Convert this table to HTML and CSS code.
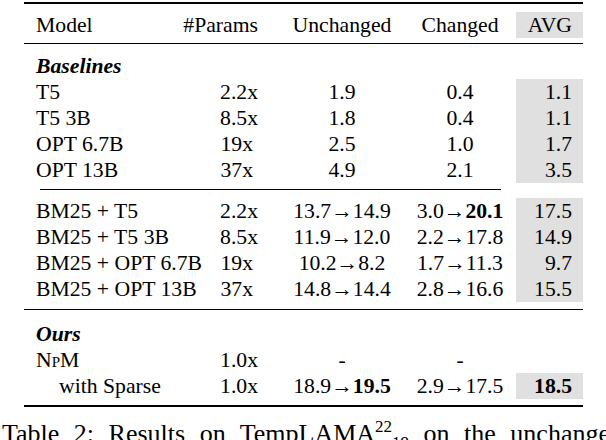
FILE: index.html
```html
<!DOCTYPE html>
<html lang="en">
<head>
<meta charset="utf-8">
<title>Table 2: Results on TempLAMA</title>
<link rel="stylesheet" href="styles.css">
</head>
<body>
<div class="page">
  <table class="results">
    <colgroup>
      <col class="c-model">
      <col class="c-params">
      <col class="c-unch">
      <col class="c-ch">
      <col class="c-avg">
    </colgroup>
    <tbody>
      <tr class="rule toprule"><td colspan="5"><div class="line"></div></td></tr>
      <tr class="row head">
        <td class="model">Model</td><td class="params">#Params</td><td class="unch">Unchanged</td><td class="ch">Changed</td><td class="avg">AVG</td>
      </tr>
      <tr class="rule midrule-head"><td colspan="5"><div class="line"></div></td></tr>
      <tr class="row group"><td class="model label" colspan="5">Baselines</td></tr>
      <tr class="row"><td class="model">T5</td><td class="params">2.2x</td><td class="unch">1.9</td><td class="ch">0.4</td><td class="avg">1.1</td></tr>
      <tr class="row"><td class="model">T5 3B</td><td class="params">8.5x</td><td class="unch">1.8</td><td class="ch">0.4</td><td class="avg">1.1</td></tr>
      <tr class="row"><td class="model">OPT 6.7B</td><td class="params"><span class="pad-dot">19x</span></td><td class="unch">2.5</td><td class="ch">1.0</td><td class="avg">1.7</td></tr>
      <tr class="row"><td class="model">OPT 13B</td><td class="params"><span class="pad-dot">37x</span></td><td class="unch">4.9</td><td class="ch">2.1</td><td class="avg">3.5</td></tr>
      <tr class="rule cmid"><td colspan="4"><div class="line"></div></td><td></td></tr>
      <tr class="row"><td class="model">BM25 + T5</td><td class="params">2.2x</td><td class="unch">13.7→14.9</td><td class="ch">3.0→<b>20.1</b></td><td class="avg">17.5</td></tr>
      <tr class="row"><td class="model">BM25 + T5 3B</td><td class="params">8.5x</td><td class="unch">11.9→12.0</td><td class="ch">2.2→17.8</td><td class="avg">14.9</td></tr>
      <tr class="row"><td class="model">BM25 + OPT 6.7B</td><td class="params"><span class="pad-dot">19x</span></td><td class="unch">10.2→8.2</td><td class="ch">1.7→11.3</td><td class="avg">9.7</td></tr>
      <tr class="row"><td class="model">BM25 + OPT 13B</td><td class="params"><span class="pad-dot">37x</span></td><td class="unch">14.8→14.4</td><td class="ch">2.8→16.6</td><td class="avg">15.5</td></tr>
      <tr class="rule midrule"><td colspan="5"><div class="line"></div></td></tr>
      <tr class="row group"><td class="model label" colspan="5">Ours</td></tr>
      <tr class="row"><td class="model">N<span class="sc">p</span>M</td><td class="params">1.0x</td><td class="unch">-</td><td class="ch">-</td><td class="blank"></td></tr>
      <tr class="row"><td class="model sub">with Sparse</td><td class="params">1.0x</td><td class="unch">18.9→<b>19.5</b></td><td class="ch">2.9→17.5</td><td class="avg"><b>18.5</b></td></tr>
      <tr class="rule bottomrule"><td colspan="5"><div class="line"></div></td></tr>
    </tbody>
  </table>
  <p class="caption">Table 2: Results on TempLAMA<sup>22</sup><sub>19</sub> on the unchanged and changed sets</p>
</div>
</body>
</html>
```

FILE: styles.css
```css
html, body {
  margin: 0;
  padding: 0;
  background: #ffffff;
}

.page {
  width: 606px;
  height: 440px;
  overflow: hidden;
  font-family: "Liberation Serif", serif;
  color: #000;
}

.results {
  margin-left: 24px;
  width: 559px;
  table-layout: fixed;
  border-collapse: collapse;
  border-spacing: 0;
  font-family: "Liberation Serif", serif;
  font-size: 21.7px;
}

.c-model { width: 156px; }
.c-params { width: 90px; }
.c-unch { width: 134px; }
.c-ch { width: 112px; }
.c-avg { width: 67px; }

.row td {
  height: 26px;
  line-height: 26px;
  padding: 0;
  white-space: nowrap;
  vertical-align: top;
  overflow: visible;
}

.model { text-align: left; padding-left: 12px !important; }
.model.sub { padding-left: 35px !important; }
.label { font-weight: bold; font-style: italic; }
.params { text-align: right; padding-right: 12px !important; }
.pad-dot { padding-right: 5px; }
.unch { text-align: center; padding-left: 10px !important; }
.ch { text-align: center; }
.avg {
  text-align: right;
  padding-right: 11px !important;
  background: #e0e0e0;
}

.sc { font-variant: small-caps; }

.rule td {
  padding: 0;
  line-height: 0;
  font-size: 0;
}
.line { height: 1px; background: #000; }

.toprule td { padding: 2px 0 8px; }
.toprule .line { height: 2px; }
.midrule-head td { padding: 5px 0 9px; }
.cmid td { padding: 6px 0 8px; }
.cmid .line { margin: 0 15px 0 16px; }
.midrule td { padding: 7px 0 11px; }
.bottomrule td { padding: 6px 0 0; }
.bottomrule .line { height: 2px; }

.caption {
  margin: 12px 0 0 2px;
  font-size: 26px;
  line-height: 30px;
  white-space: nowrap;
  word-spacing: 8px;
}
.caption sup, .caption sub { font-size: 17px; line-height: 0; }
```
